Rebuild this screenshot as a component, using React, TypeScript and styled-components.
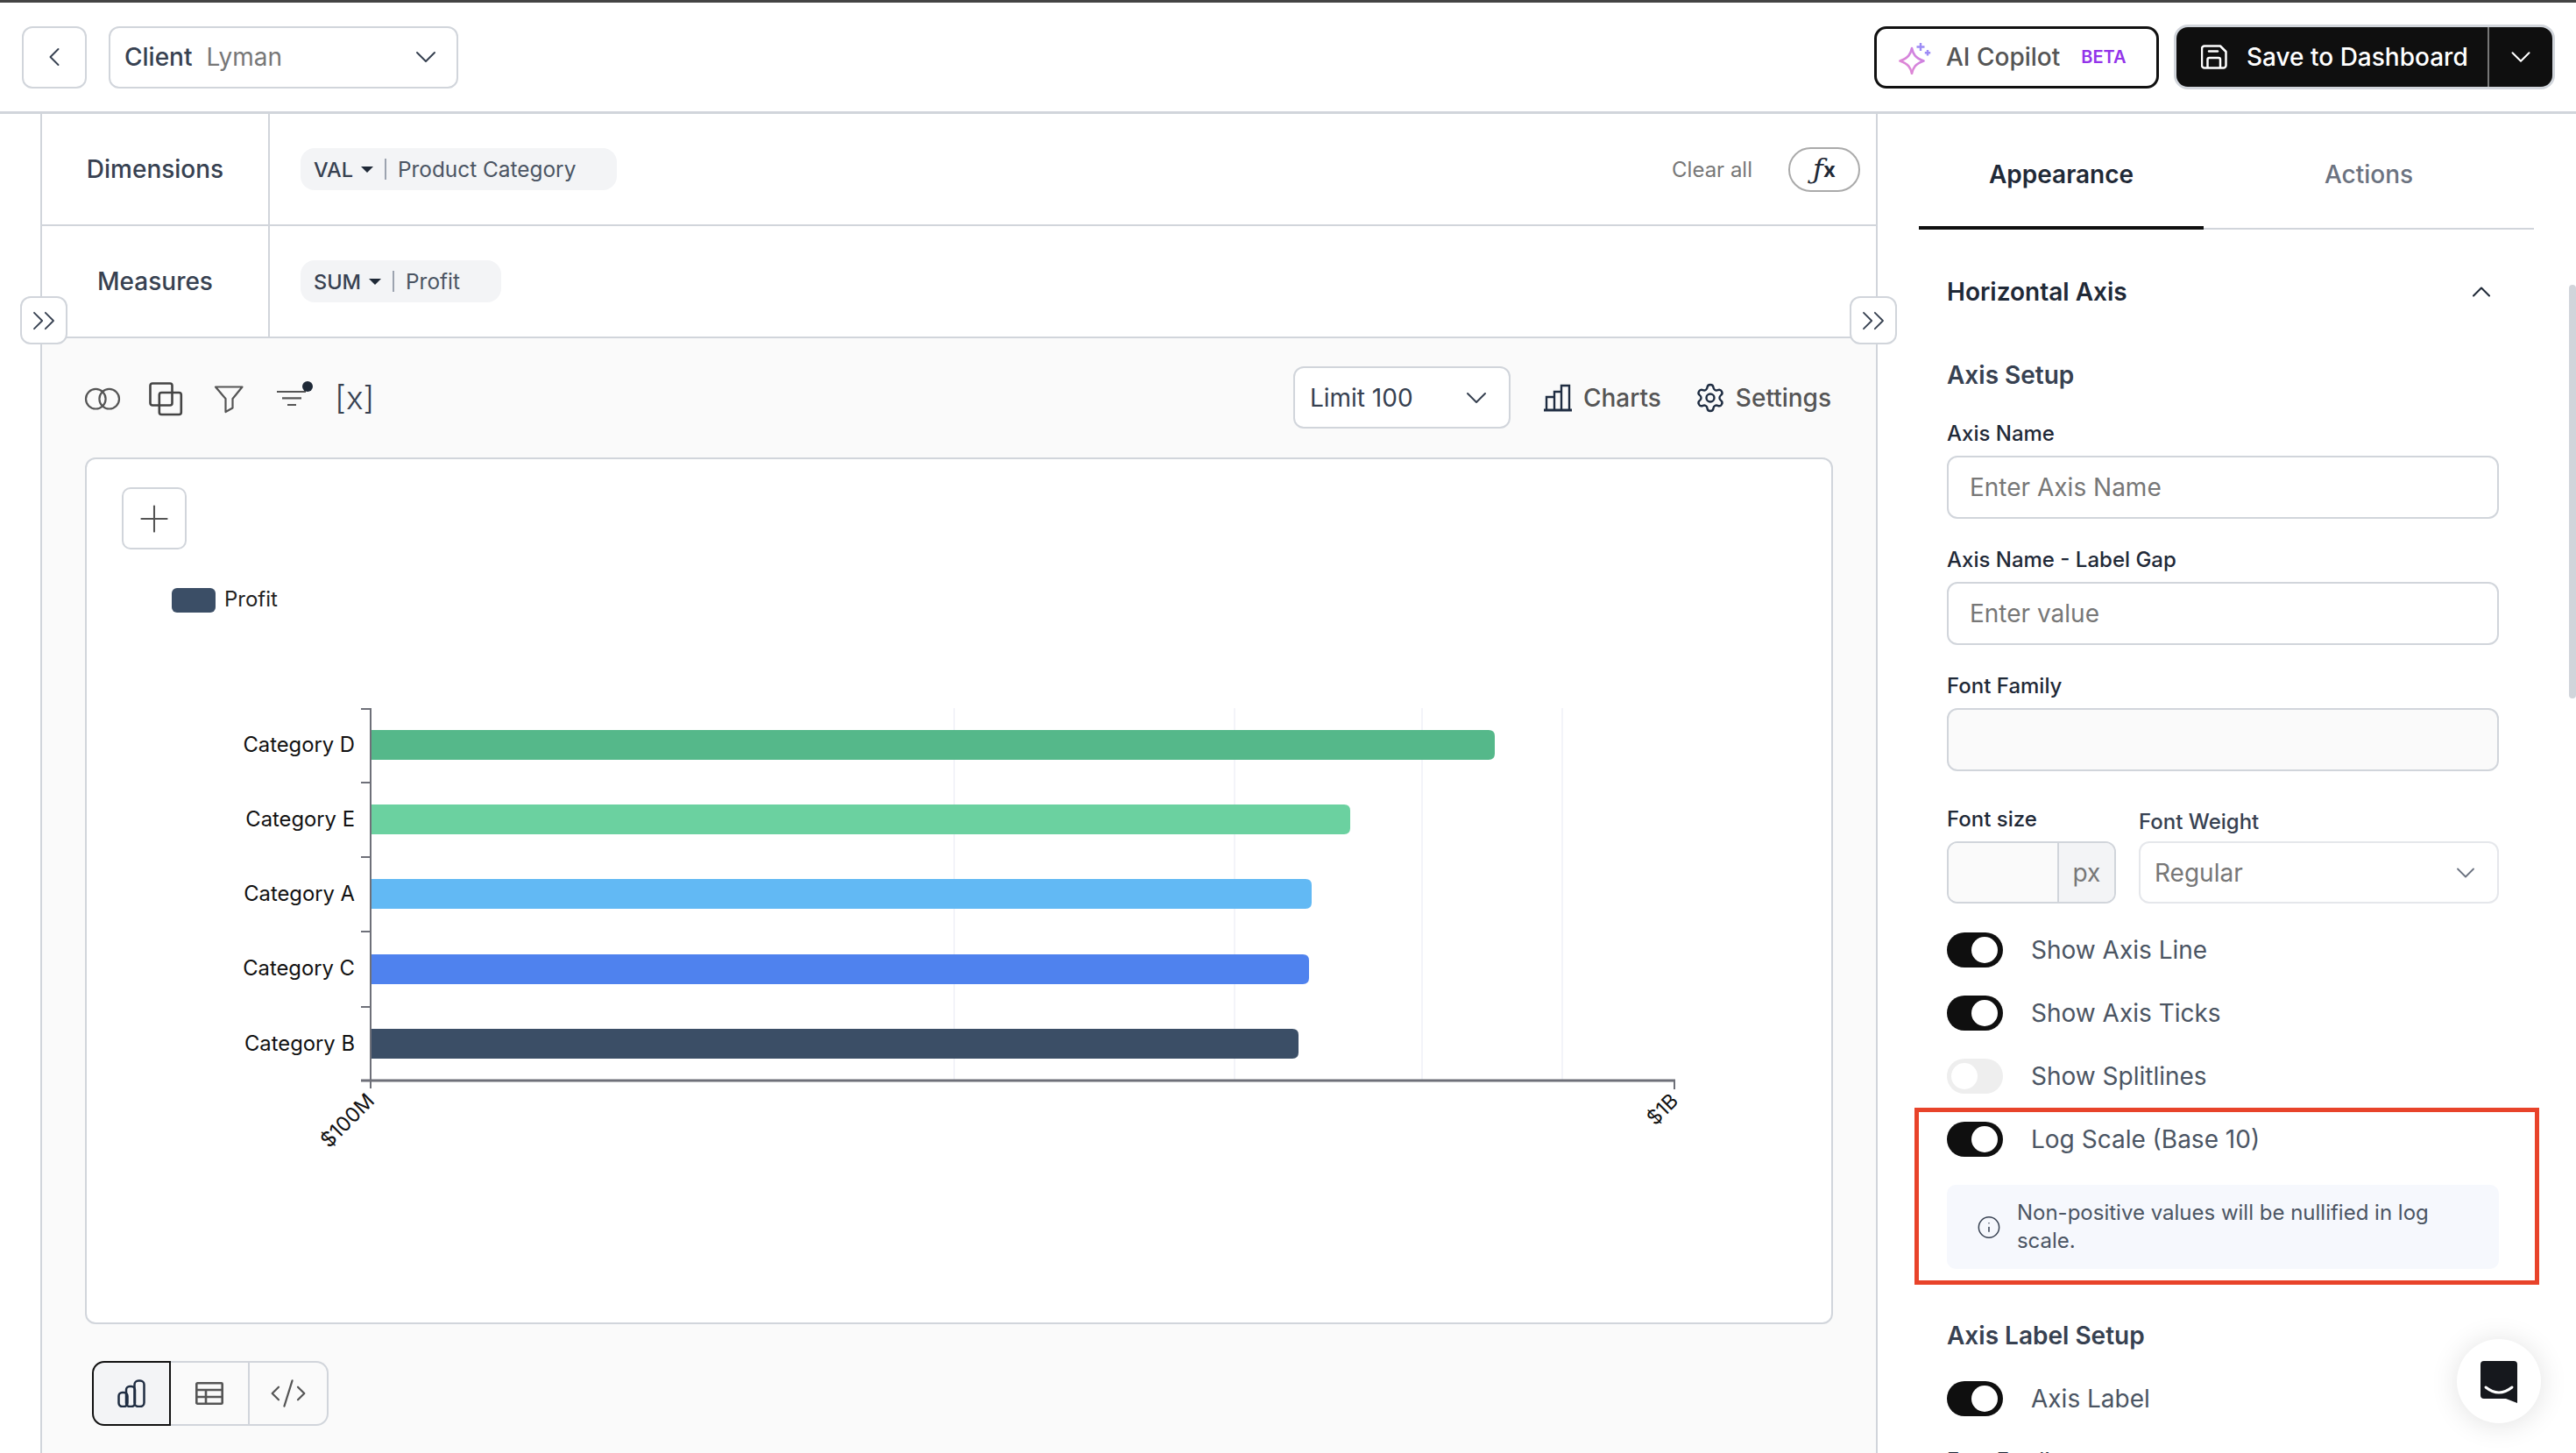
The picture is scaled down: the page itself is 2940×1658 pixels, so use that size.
import styled, { createGlobalStyle } from "styled-components";
import { ChevronDown, ChevronLeft, ChevronUp, ChevronsRight, CodeXml, Info, Plus, Settings } from "lucide-react";

const GlobalStyle = createGlobalStyle`
  html, body {
    margin: 0;
    height: 100%;
    overflow: hidden;
    background: #fff;
    font-family: Inter, "Noto Sans", sans-serif;
  }
  * { box-sizing: border-box; }
`;

const bars = [
  { name: "Category D", y: 833, end: 1706, color: "#55b88a", labelY: 849 },
  { name: "Category E", y: 918, end: 1541, color: "#6bd1a0", labelY: 934 },
  { name: "Category A", y: 1003, end: 1497, color: "#62b9f4", labelY: 1019 },
  { name: "Category C", y: 1089, end: 1494, color: "#4f82ee", labelY: 1104 },
  { name: "Category B", y: 1174, end: 1482, color: "#3b4e66", labelY: 1190 },
];

const barPath = (y: number, end: number) =>
  `M422 ${y} H${end - 7} Q${end} ${y} ${end} ${y + 7} V${y + 27} Q${end} ${y + 34} ${end - 7} ${y + 34} H422 Z`;

const App = () => {
  return (
    <Page>
      <GlobalStyle />
      <Header>
        <HeaderGroup>
          <BackButton>
            <ChevronLeft size={36} strokeWidth={1.3} color="#374151" />
          </BackButton>
          <ClientSelect>
            <span>
              <Strong>Client</Strong>
              <Muted>Lyman</Muted>
            </span>
            <ChevronDown size={40} strokeWidth={1.2} color="#374151" />
          </ClientSelect>
        </HeaderGroup>
        <HeaderGroup>
          <CopilotButton>
            <svg width="42" height="40" viewBox="0 0 42 40" fill="none">
              <defs>
                <linearGradient id="spark" x1="0" y1="1" x2="1" y2="0">
                  <stop offset="0" stopColor="#e58ad0" />
                  <stop offset="1" stopColor="#c77fe6" />
                </linearGradient>
              </defs>
              <path
                d="M16 10 C17.5 17 20 21 29.5 24.5 C20 28 17.5 32 16 39 C14.5 32 12 28 2.5 24.5 C12 21 14.5 17 16 10 Z"
                stroke="url(#spark)"
                strokeWidth="2.6"
                strokeLinejoin="round"
              />
              <path d="M26 4 V13 M21.5 8.5 H30.5" stroke="#9d8cf5" strokeWidth="2.4" />
              <path d="M34 12 V18.5 M30.8 15.2 H37.2" stroke="#9d8cf5" strokeWidth="2.4" />
            </svg>
            <CopilotLabel>AI Copilot</CopilotLabel>
            <BetaTag>BETA</BetaTag>
          </CopilotButton>
          <SaveButton>
            <SaveMain>
              <svg width="30" height="28" viewBox="0 0 30 28" fill="none" stroke="#fff" strokeWidth="2.5" strokeLinejoin="round">
                <path d="M4 1.5 H22 L28.5 8 V23.5 a3 3 0 0 1 -3 3 H4 a3 3 0 0 1 -3 -3 V4.5 a3 3 0 0 1 3 -3 Z" />
                <path d="M9 7.5 H19" strokeLinecap="round" />
                <path d="M7.5 26.5 V17 a2 2 0 0 1 2 -2 H20 a2 2 0 0 1 2 2 V26.5" />
              </svg>
              Save to Dashboard
            </SaveMain>
            <SaveCaret>
              <ChevronDown size={38} strokeWidth={1.3} color="#fff" />
            </SaveCaret>
          </SaveButton>
        </HeaderGroup>
      </Header>

      <Body>
        <Gutter />
        <Main>
          <CollapseButton $side="left">
            <ChevronsRight size={44} strokeWidth={1} color="#374151" />
          </CollapseButton>
          <CollapseButton $side="right">
            <ChevronsRight size={44} strokeWidth={1} color="#374151" />
          </CollapseButton>

          <ShelfRow>
            <ShelfLabel>Dimensions</ShelfLabel>
            <ShelfBody>
              <Pill>
                <PillKind>VAL</PillKind>
                <PillCaret />
                <PillDivider />
                Product Category
              </Pill>
              <ShelfActions>
                <ClearAll>Clear all</ClearAll>
                <FxButton>
                  <FxF>ƒ</FxF>
                  <FxX>x</FxX>
                </FxButton>
              </ShelfActions>
            </ShelfBody>
          </ShelfRow>
          <ShelfRow>
            <ShelfLabel>Measures</ShelfLabel>
            <ShelfBody>
              <Pill>
                <PillKind>SUM</PillKind>
                <PillCaret />
                <PillDivider />
                Profit
              </Pill>
            </ShelfBody>
          </ShelfRow>

          <Workspace>
            <Toolbar>
              <ToolIcons>
                <ToolIcon viewBox="0 0 40 40" fill="none" stroke="#555" strokeWidth="2.2">
                  <circle cx="12.3" cy="21.2" r="11.3" />
                  <circle cx="27.7" cy="21.2" r="11.3" />
                </ToolIcon>
                <ToolIcon viewBox="0 0 40 40" fill="none" stroke="#444" strokeWidth="2.6">
                  <rect x="2.5" y="3.5" width="25" height="25" rx="2.5" />
                  <rect x="12.8" y="14" width="25" height="25" rx="2.5" />
                </ToolIcon>
                <ToolIcon viewBox="0 0 40 40" fill="none" stroke="#555" strokeWidth="2.2" strokeLinejoin="round">
                  <path d="M5 7.5 H35.5 L24.5 21 V31.5 L16.5 36 V21 Z" />
                </ToolIcon>
                <ToolIcon viewBox="0 0 40 40" fill="none" stroke="#555" strokeWidth="2.2">
                  <path d="M3 13 H36 M9 20.3 H31 M15 28 H25" />
                  <circle cx="38" cy="7" r="6" fill="#1f2937" stroke="none" />
                </ToolIcon>
                <VariableTag>[x]</VariableTag>
              </ToolIcons>
              <ToolActions>
                <LimitSelect>
                  Limit 100
                  <ChevronDown size={40} strokeWidth={1.2} color="#374151" />
                </LimitSelect>
                <ToolAction>
                  <svg width="34" height="32" viewBox="0 0 34 32" fill="none" stroke="#1f2d42" strokeWidth="2.4">
                    <path d="M0 30 H32" strokeWidth="3" />
                    <path d="M3 30 V15 H12 M12 30 V9 H20 M20 30 V2 H29 V30" />
                  </svg>
                  Charts
                </ToolAction>
                <ToolAction>
                  <Settings size={36} strokeWidth={1.6} color="#1f2d42" />
                  Settings
                </ToolAction>
              </ToolActions>
            </Toolbar>

            <ChartCard>
              <AddButton>
                <Plus size={50} strokeWidth={1} color="#555" />
              </AddButton>
              <ChartSvg viewBox="99 640 1989 869" width="1989" height="869">
                <rect x="196" y="671" width="50" height="28" rx="6" fill="#3b4e66" />
                <text x="256" y="692" fontSize="24" fill="#222">Profit</text>

                {[1089, 1409, 1623, 1783].map((x) => (
                  <line key={x} x1={x} x2={x} y1="808" y2="1233" stroke="#f3f4f9" strokeWidth="2" />
                ))}
                {bars.map((b) => (
                  <g key={b.name}>
                    <path d={barPath(b.y, b.end)} fill={b.color} />
                    <text x="405" y={b.labelY + 9} fontSize="23.8" textAnchor="end" fill="#111">{b.name}</text>
                  </g>
                ))}
                <g stroke="#6e7079" strokeWidth="2">
                  <line x1="423" x2="423" y1="808" y2="1242" />
                  <line x1="412" x2="1912" y1="1233" y2="1233" strokeWidth="3" />
                  <line x1="1911" x2="1911" y1="1233" y2="1243" />
                  {[809, 893, 978, 1063, 1149].map((y) => (
                    <line key={y} x1="412" x2="423" y1={y} y2={y} />
                  ))}
                </g>
                <text transform="translate(423 1252) rotate(-45)" fontSize="23.4" textAnchor="end" dy="8" fill="#111">$100M</text>
                <text transform="translate(1911 1252) rotate(-45)" fontSize="23" textAnchor="end" dy="8" fill="#111">$1B</text>
              </ChartSvg>
            </ChartCard>

            <ViewTabs>
              <ViewTab $active>
                <svg width="32" height="32" viewBox="0 0 32 32" fill="none" stroke="#1f2d42" strokeWidth="2.5">
                  <rect x="1.5" y="15" width="10" height="16" rx="4" />
                  <rect x="10" y="8" width="10" height="23" rx="4" />
                  <rect x="19.5" y="1.5" width="11" height="29.5" rx="4.5" />
                </svg>
              </ViewTab>
              <ViewTab>
                <svg width="32" height="26" viewBox="0 0 32 26" fill="none" stroke="#555" strokeWidth="2.6">
                  <rect x="1.3" y="1.3" width="29.4" height="23.4" rx="1" />
                  <path d="M1.3 9 H30.7 M1.3 17 H30.7 M12 9 V24.7" />
                </svg>
              </ViewTab>
              <ViewTab>
                <CodeXml size={44} strokeWidth={1.2} color="#555" />
              </ViewTab>
            </ViewTabs>
          </Workspace>
        </Main>

        <Aside>
          <Scrollbar />
          <Tabs>
            <Tab $active>Appearance</Tab>
            <Tab>Actions</Tab>
          </Tabs>
          <Panel>
            <SectionHeader>
              Horizontal Axis
              <ChevronUp size={36} strokeWidth={1.4} color="#1f2937" />
            </SectionHeader>
            <GroupTitle>Axis Setup</GroupTitle>
            <Field>
              <FieldLabel>Axis Name</FieldLabel>
              <TextInput placeholder="Enter Axis Name" />
            </Field>
            <Field>
              <FieldLabel>Axis Name - Label Gap</FieldLabel>
              <TextInput placeholder="Enter value" />
            </Field>
            <Field>
              <FieldLabel>Font Family</FieldLabel>
              <TextInput $disabled />
            </Field>
            <FontRow>
              <SizeColumn>
                <FieldLabel>Font size</FieldLabel>
                <SizeBox>
                  <SizeValue />
                  <SizeUnit>px</SizeUnit>
                </SizeBox>
              </SizeColumn>
              <WeightColumn>
                <FieldLabel $shift>Font Weight</FieldLabel>
                <WeightSelect>
                  Regular
                  <ChevronDown size={36} strokeWidth={1.2} color="#6b7280" />
                </WeightSelect>
              </WeightColumn>
            </FontRow>
            <ToggleList>
              <ToggleRow>
                <Toggle $on><Thumb /></Toggle>
                Show Axis Line
              </ToggleRow>
              <ToggleRow>
                <Toggle $on><Thumb /></Toggle>
                Show Axis Ticks
              </ToggleRow>
              <ToggleRow>
                <Toggle><Thumb /></Toggle>
                Show Splitlines
              </ToggleRow>
              <LogScaleBlock>
                <Highlight />
                <ToggleRow>
                  <Toggle $on><Thumb /></Toggle>
                  Log Scale (Base 10)
                </ToggleRow>
                <InfoNote>
                  <Info size={31} strokeWidth={1.3} color="#374151" />
                  <span>Non-positive values will be nullified in log scale.</span>
                </InfoNote>
              </LogScaleBlock>
            </ToggleList>
            <GroupTitle $spaced>Axis Label Setup</GroupTitle>
            <ToggleRow>
              <Toggle $on><Thumb /></Toggle>
              Axis Label
            </ToggleRow>
            <FieldLabel $after>Font Family</FieldLabel>
          </Panel>
        </Aside>
      </Body>

      <ChatBubble>
        <svg width="42" height="48" viewBox="0 0 42 48">
          <path d="M4 0 H38 a4 4 0 0 1 4 4 V48 L29 43 H4 a4 4 0 0 1 -4 -4 V4 a4 4 0 0 1 4 -4 Z" fill="#16181d" />
          <path d="M6 30 Q21 42 36 30" fill="none" stroke="#fff" strokeWidth="3" strokeLinecap="round" />
        </svg>
      </ChatBubble>
    </Page>
  );
};

const Page = styled.div`
  position: relative;
  width: 2940px;
  height: 1658px;
  overflow: hidden;
  background: #fff;
`;

const Header = styled.header`
  display: flex;
  align-items: center;
  justify-content: space-between;
  height: 130px;
  padding: 0 24px 0 25px;
  border-top: 3px solid #444;
  border-bottom: 3px solid #d1d5db;
`;
const HeaderGroup = styled.div`
  display: flex;
  align-items: center;
  gap: 17px;
  &:first-child { gap: 25px; }
`;
const BackButton = styled.button`
  display: flex;
  align-items: center;
  justify-content: center;
  width: 74px;
  height: 71px;
  padding: 0;
  background: #fff;
  border: 2px solid #d1d5db;
  border-radius: 12px;
`;
const ClientSelect = styled.div`
  display: flex;
  align-items: center;
  justify-content: space-between;
  width: 399px;
  height: 71px;
  padding: 0 15px 0 16px;
  border: 2px solid #d1d5db;
  border-radius: 12px;
  font-size: 28px;
`;
const Strong = styled.span`
  color: #374151;
  font-weight: 450;
`;
const Muted = styled.span`
  margin-left: 16px;
  color: #777;
`;
const CopilotButton = styled.button`
  display: flex;
  align-items: center;
  width: 325px;
  height: 71px;
  padding: 0 0 0 24px;
  background: #fff;
  border: 3px solid #111;
  border-radius: 14px;
  font-family: inherit;
`;
const CopilotLabel = styled.span`
  margin-left: 13px;
  color: #555;
  font-size: 28px;
  font-weight: 450;
`;
const BetaTag = styled.span`
  margin-left: 24px;
  color: #9333ea;
  font-size: 20px;
  font-weight: 600;
`;
const SaveButton = styled.div`
  display: flex;
  width: 435px;
  height: 74px;
  background: #0f0f0f;
  border: 3px solid #d1d5db;
  border-radius: 16px;
  overflow: hidden;
`;
const SaveMain = styled.div`
  display: flex;
  align-items: center;
  gap: 22px;
  width: 357px;
  padding-left: 28px;
  border-right: 2px solid #777;
  color: #fff;
  font-size: 28px;
  font-weight: 500;
`;
const SaveCaret = styled.div`
  display: flex;
  align-items: center;
  justify-content: center;
  flex: 1;
`;

const Body = styled.div`
  display: flex;
  height: 1528px;
`;
const Gutter = styled.div`
  width: 46px;
`;
const Main = styled.main`
  position: relative;
  display: flex;
  flex-direction: column;
  width: 2095px;
  border-left: 2px solid #d1d5db;
`;
const CollapseButton = styled.button<{ $side: "left" | "right" }>`
  position: absolute;
  top: 208px;
  ${(p) => (p.$side === "left" ? "left: -25px;" : "right: -24px;")}
  z-index: 2;
  display: flex;
  align-items: center;
  justify-content: center;
  width: 54px;
  height: 55px;
  padding: 0;
  background: #fff;
  border: 2px solid #d1d5db;
  border-radius: 12px;
`;
const ShelfRow = styled.div`
  display: flex;
  height: 128px;
  border-bottom: 2px solid #d1d5db;
  background: #fff;
`;
const ShelfLabel = styled.div`
  display: flex;
  align-items: center;
  justify-content: center;
  width: 260px;
  border-right: 2px solid #d1d5db;
  color: #374151;
  font-size: 28px;
  font-weight: 450;
`;
const ShelfBody = styled.div`
  display: flex;
  align-items: center;
  justify-content: space-between;
  flex: 1;
  padding: 0 18px 0 35px;
`;
const Pill = styled.div`
  display: flex;
  align-items: center;
  height: 48px;
  padding: 0 47px 0 15px;
  background: #f3f4f6;
  border-radius: 16px;
  color: #4b5563;
  font-size: 24.4px;
`;
const PillKind = styled.span`
  color: #374151;
  font-size: 23.5px;
  font-weight: 500;
`;
const PillCaret = styled.span`
  width: 0;
  height: 0;
  margin-left: 9px;
  border-left: 7px solid transparent;
  border-right: 7px solid transparent;
  border-top: 7px solid #1f2937;
`;
const PillDivider = styled.span`
  width: 2px;
  height: 24px;
  margin: 0 13px;
  background: #9ca3af;
`;
const ShelfActions = styled.div`
  display: flex;
  align-items: center;
  gap: 41px;
`;
const ClearAll = styled.span`
  color: #777;
  font-size: 24px;
`;
const FxButton = styled.div`
  display: flex;
  align-items: center;
  justify-content: center;
  width: 82px;
  height: 51px;
  border: 2.5px solid #aaa;
  border-radius: 26px;
  color: #1f2937;
`;
const FxF = styled.span`
  font-family: "DejaVu Serif", serif;
  font-size: 32px;
  font-style: italic;
`;
const FxX = styled.span`
  font-size: 24px;
  font-weight: 700;
`;

const Workspace = styled.section`
  flex: 1;
  padding: 32px 49px 0 49px;
  background: #fafafa;
`;
const Toolbar = styled.div`
  display: flex;
  align-items: center;
  justify-content: space-between;
  height: 71px;
  padding-right: 2px;
`;
const ToolIcons = styled.div`
  display: flex;
  align-items: center;
  gap: 32px;
`;
const ToolIcon = styled.svg`
  width: 40px;
  height: 40px;
  overflow: visible;
`;
const VariableTag = styled.span`
  margin-left: -3px;
  color: #374151;
  font-size: 37px;
  font-weight: 300;
`;
const ToolActions = styled.div`
  display: flex;
  align-items: center;
  gap: 38px;
`;
const LimitSelect = styled.div`
  display: flex;
  align-items: center;
  justify-content: space-between;
  width: 248px;
  height: 71px;
  padding: 0 17px 0 17px;
  background: #fff;
  border: 2px solid #d1d5db;
  border-radius: 12px;
  color: #374151;
  font-size: 28px;
`;
const ToolAction = styled.div`
  display: flex;
  align-items: center;
  gap: 11px;
  color: #555;
  font-size: 28px;
  font-weight: 450;
`;

const ChartCard = styled.div`
  height: 989px;
  margin-top: 33px;
  padding: 32px 0 0 40px;
  background: #fff;
  border: 2px solid #d1d5db;
  border-radius: 12px;
`;
const AddButton = styled.div`
  display: flex;
  align-items: center;
  justify-content: center;
  width: 74px;
  height: 71px;
  border: 2px solid #d1d5db;
  border-radius: 10px;
`;
const ChartSvg = styled.svg`
  display: block;
  margin: 13px 0 0 -40px;
  font-family: Inter, sans-serif;
`;
const ViewTabs = styled.div`
  display: flex;
  width: 270px;
  height: 74px;
  margin: 42px 0 0 8px;
`;
const ViewTab = styled.div<{ $active?: boolean }>`
  display: flex;
  align-items: center;
  justify-content: center;
  width: 90px;
  border: 2px solid #d1d5db;
  border-left-width: 0;
  ${(p) =>
    p.$active &&
    `
    border: 2.5px solid #111;
    border-radius: 14px 0 0 14px;
    background: #f3f4f6;
  `}
  &:last-child { border-radius: 0 14px 14px 0; }
`;

const Aside = styled.aside`
  position: relative;
  flex: 1;
  border-left: 2px solid #d1d5db;
  padding-left: 47px;
`;
const Scrollbar = styled.div`
  position: absolute;
  top: 195px;
  right: 0;
  width: 8px;
  height: 472px;
  border-radius: 4px;
  background: #d1d5db;
`;
const Tabs = styled.div`
  display: flex;
  width: 702px;
  height: 132px;
  border-bottom: 2px solid #d1d5db;
`;
const Tab = styled.div<{ $active?: boolean }>`
  display: flex;
  align-items: center;
  justify-content: center;
  width: ${(p) => (p.$active ? "325px" : "377px")};
  height: 132px;
  padding-top: ${(p) => (p.$active ? "10px" : "6px")};
  color: ${(p) => (p.$active ? "#1f2937" : "#6b7280")};
  font-size: 28px;
  font-weight: ${(p) => (p.$active ? 600 : 500)};
  border-bottom: ${(p) => (p.$active ? "4px solid #0f0f0f" : "none")};
`;
const Panel = styled.div`
  width: 630px;
  margin-left: 32px;
`;
const SectionHeader = styled.div`
  display: flex;
  align-items: center;
  justify-content: space-between;
  height: 40px;
  margin-top: 51px;
  padding-right: 2px;
  color: #1f2937;
  font-size: 28px;
  font-weight: 600;
`;
const GroupTitle = styled.div<{ $spaced?: boolean }>`
  height: 36px;
  margin-top: ${(p) => (p.$spaced ? "58px" : "57px")};
  margin-bottom: 34px;
  color: #374151;
  font-size: 28px;
  font-weight: 600;
  line-height: 36px;
`;
const Field = styled.div`
  margin-bottom: 32px;
`;
const FieldLabel = styled.div<{ $shift?: boolean; $after?: boolean }>`
  height: 30px;
  margin-bottom: 10px;
  color: #1f2937;
  font-size: 24px;
  font-weight: 500;
  line-height: 30px;
  ${(p) => p.$shift && "position: relative; top: 3px; color: #374151;"}
  ${(p) => p.$after && "margin-top: 36px;"}
`;
const TextInput = styled.input.attrs<{ $disabled?: boolean }>(() => ({ type: "text" }))<{ $disabled?: boolean }>`
  display: block;
  width: 100%;
  height: 72px;
  padding: 0 24px;
  background: ${(p) => (p.$disabled ? "#fafafa" : "#fff")};
  border: 2px solid #d1d5db;
  border-radius: 12px;
  outline: none;
  font-family: inherit;
  font-size: 28px;
  &::placeholder { color: #777; opacity: 1; }
`;
const FontRow = styled.div`
  display: flex;
  gap: 26px;
  margin-top: 40px;
`;
const SizeColumn = styled.div`
  width: 193px;
`;
const WeightColumn = styled.div`
  width: 411px;
`;
const SizeBox = styled.div`
  display: flex;
  height: 71px;
  border: 2px solid #d1d5db;
  border-radius: 12px;
  overflow: hidden;
`;
const SizeValue = styled.div`
  width: 126px;
  background: #fafafa;
  border-right: 2px solid #d1d5db;
`;
const SizeUnit = styled.div`
  display: flex;
  align-items: center;
  justify-content: center;
  flex: 1;
  background: #f3f4f6;
  color: #777;
  font-size: 28px;
`;
const WeightSelect = styled.div`
  display: flex;
  align-items: center;
  justify-content: space-between;
  height: 71px;
  padding: 0 18px 0 16px;
  border: 2px solid #e5e7eb;
  border-radius: 12px;
  color: #777;
  font-size: 28px;
`;
const ToggleList = styled.div`
  display: flex;
  flex-direction: column;
  gap: 32px;
  margin-top: 33px;
`;
const ToggleRow = styled.div`
  display: flex;
  align-items: center;
  gap: 32px;
  height: 40px;
  color: #4b5563;
  font-size: 28px;
`;
const Toggle = styled.div<{ $on?: boolean }>`
  display: flex;
  align-items: center;
  justify-content: ${(p) => (p.$on ? "flex-end" : "flex-start")};
  width: 64px;
  height: 40px;
  padding: 0 ${(p) => (p.$on ? "6px" : "5px")};
  background: ${(p) => (p.$on ? "#0f0f0f" : "#eeeeee")};
  border-radius: 20px;
`;
const Thumb = styled.div`
  width: 30px;
  height: 30px;
  border-radius: 50%;
  background: #fff;
`;
const LogScaleBlock = styled.div`
  position: relative;
`;
const Highlight = styled.div`
  position: absolute;
  top: -16px;
  left: -37px;
  width: 713px;
  height: 202px;
  border: 5px solid #e8432a;
  pointer-events: none;
`;
const InfoNote = styled.div`
  display: flex;
  align-items: center;
  gap: 18px;
  height: 96px;
  margin-top: 32px;
  padding: 0 60px 0 34px;
  background: #f6f8fd;
  border-radius: 10px;
  color: #4b5563;
  font-size: 24px;
  line-height: 32px;
`;
const ChatBubble = styled.div`
  position: absolute;
  right: 40px;
  bottom: 34px;
  display: flex;
  align-items: center;
  justify-content: center;
  width: 96px;
  height: 96px;
  padding-top: 2px;
  border-radius: 50%;
  background: #fff;
  box-shadow: 0 2px 32px rgba(0, 0, 0, 0.12);
`;

export default App;
